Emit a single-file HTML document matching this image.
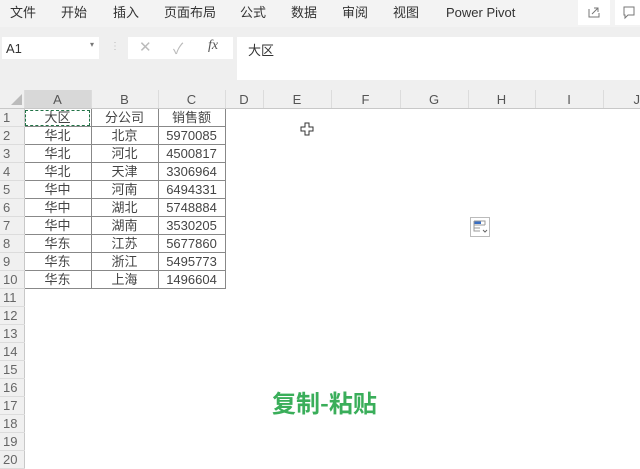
<!DOCTYPE html>
<html><head><meta charset="utf-8"><style>
*{margin:0;padding:0;box-sizing:border-box}
body{width:640px;height:469px;overflow:hidden;background:#fff;font-family:"Liberation Sans","Noto Sans CJK SC",sans-serif;position:relative;color:#333}
.tabs{position:absolute;left:0;top:0;width:640px;height:27px;background:#f3f3f3;font-size:13px}
.tabs span{position:absolute;top:4px;line-height:17px}
.fbar{position:absolute;left:0;top:27px;width:640px;height:63px;background:#efefef}
.box{position:absolute;background:#fff}
.sheet{position:absolute;left:0;top:90px}
table{border-collapse:collapse;table-layout:fixed}
td{height:18px;border-right:1px solid #dcdcdc;border-bottom:1px solid #dcdcdc;font-size:13px;text-align:center;color:#444;padding:0;line-height:16px;white-space:nowrap;overflow:hidden}
tr.h td{height:17px;background:#f0f0f0;color:#555;font-size:13px;border-bottom:1px solid #c8c8c8;line-height:15px}
td.r{background:#f0f0f0;color:#666;font-size:13px;text-align:left;padding-left:3px;border-right:1px solid #c8c8c8}
td.d{border-right:1px solid #888;border-bottom:1px solid #888}
td.n{border-right:none;border-bottom:none}
</style></head><body>
<div class="tabs">
<span style="left:10px">文件</span><span style="left:61px">开始</span><span style="left:113px">插入</span><span style="left:164px">页面布局</span><span style="left:240px">公式</span><span style="left:291px">数据</span><span style="left:342px">审阅</span><span style="left:393px">视图</span><span style="left:446px;top:4px">Power Pivot</span>
<div class="box" style="left:578px;top:0;width:32px;height:25px"><svg width="32" height="25"><path d="M11 9v8h10v-4M14 14l6-6M16 8h4v4" stroke="#777" fill="none" stroke-width="1"/></svg></div>
<div class="box" style="left:615px;top:0;width:25px;height:25px"><svg width="25" height="25"><path d="M9 7h10v8h-6l-3 3v-3h-1z" stroke="#777" fill="none"/></svg></div>
</div>
<div class="fbar">
<div class="box" style="left:2px;top:10px;width:97px;height:22px;font-size:13px;padding:4px 4px">A1<span style="position:absolute;right:5px;top:3px;font-size:8px;color:#777">▾</span></div>
<div style="position:absolute;left:110px;top:14px;color:#bbb;font-size:10px">⋮</div>
<div class="box" style="left:128px;top:10px;width:105px;height:22px;font-size:15px;color:#bbb"><span style="position:absolute;left:11px;top:1px">✕</span><span style="position:absolute;left:45px;top:1px">✓</span><span style="position:absolute;left:80px;top:1px;font-family:'Liberation Serif',serif;font-style:italic;color:#555;font-size:14px">fx</span></div>
<div class="box" style="left:237px;top:10px;width:403px;height:43px;font-size:13px;padding:3px 11px">大区</div>
</div>
<div class="sheet"><table>
<colgroup><col style="width:24px"><col style="width:67px"><col style="width:67px"><col style="width:67px"><col style="width:38px"><col style="width:68px"><col style="width:69px"><col style="width:68px"><col style="width:67px"><col style="width:68px"><col style="width:37px"></colgroup>
<tr class="h"><td style="background:#f0f0f0"><svg width="20" height="15"><path d="M9 15L20 4V15Z" fill="#bbb"/></svg></td><td style="background:#d8d8d8">A</td><td>B</td><td>C</td><td>D</td><td>E</td><td>F</td><td>G</td><td>H</td><td>I</td><td style="text-align:right;border-right:none">J</td></tr>
<tr><td class="r">1</td><td class="d" style="outline:1px dashed #217346;outline-offset:-2px">大区</td><td class="d">分公司</td><td class="d">销售额</td><td class="n"></td><td class="n"></td><td class="n"></td><td class="n"></td><td class="n"></td><td class="n"></td><td class="n"></td></tr>
<tr><td class="r">2</td><td class="d">华北</td><td class="d">北京</td><td class="d">5970085</td><td class="n" colspan="7"></td></tr>
<tr><td class="r">3</td><td class="d">华北</td><td class="d">河北</td><td class="d">4500817</td><td class="n" colspan="7"></td></tr>
<tr><td class="r">4</td><td class="d">华北</td><td class="d">天津</td><td class="d">3306964</td><td class="n" colspan="7"></td></tr>
<tr><td class="r">5</td><td class="d">华中</td><td class="d">河南</td><td class="d">6494331</td><td class="n" colspan="7"></td></tr>
<tr><td class="r">6</td><td class="d">华中</td><td class="d">湖北</td><td class="d">5748884</td><td class="n" colspan="7"></td></tr>
<tr><td class="r">7</td><td class="d">华中</td><td class="d">湖南</td><td class="d">3530205</td><td class="n" colspan="7"></td></tr>
<tr><td class="r">8</td><td class="d">华东</td><td class="d">江苏</td><td class="d">5677860</td><td class="n" colspan="7"></td></tr>
<tr><td class="r">9</td><td class="d">华东</td><td class="d">浙江</td><td class="d">5495773</td><td class="n" colspan="7"></td></tr>
<tr><td class="r">10</td><td class="d">华东</td><td class="d">上海</td><td class="d">1496604</td><td class="n" colspan="7"></td></tr>
<tr><td class="r">11</td><td class="n" colspan="10"></td></tr>
<tr><td class="r">12</td><td class="n" colspan="10"></td></tr>
<tr><td class="r">13</td><td class="n" colspan="10"></td></tr>
<tr><td class="r">14</td><td class="n" colspan="10"></td></tr>
<tr><td class="r">15</td><td class="n" colspan="10"></td></tr>
<tr><td class="r">16</td><td class="n" colspan="10"></td></tr>
<tr><td class="r">17</td><td class="n" colspan="10"></td></tr>
<tr><td class="r">18</td><td class="n" colspan="10"></td></tr>
<tr><td class="r">19</td><td class="n" colspan="10"></td></tr>
<tr><td class="r">20</td><td class="n" colspan="10"></td></tr>
</table></div>
<svg style="position:absolute;left:300px;top:122px" width="14" height="14"><path d="M5 1h4v4h4v4h-4v4h-4v-4h-4v-4h4z" fill="#fff" stroke="#333"/></svg>
<svg style="position:absolute;left:470px;top:217px" width="20" height="20"><rect x="0.5" y="0.5" width="19" height="19" fill="#fff" stroke="#bbb"/><rect x="4" y="4" width="7" height="3" fill="#3a6fc4"/><path d="M4 4h11v4M4 4v10h6M4 8h11M4 11h6" stroke="#999" fill="none"/><path d="M13 13l2 2 2-2" stroke="#666" fill="none"/></svg>
<div style="position:absolute;left:272px;top:384px;font-size:24px;font-weight:bold;color:#3aae5a;font-family:'Noto Sans CJK SC',sans-serif">复制-粘贴</div>
</body></html>
